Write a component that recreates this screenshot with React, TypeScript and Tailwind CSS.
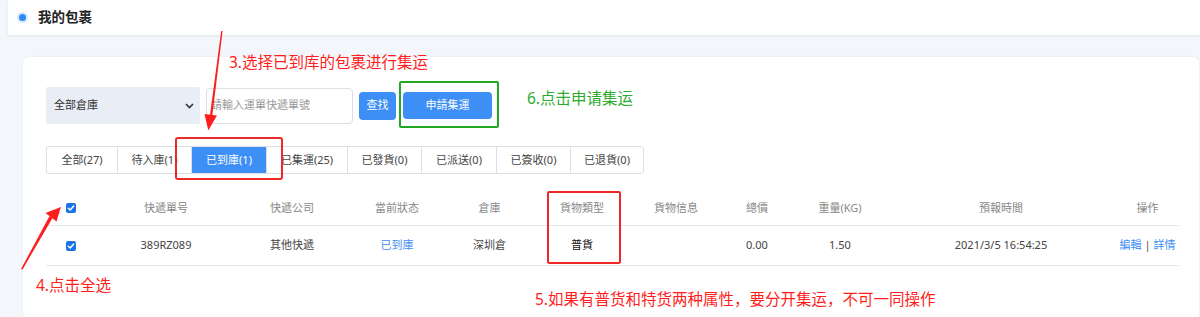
import React from "react";

const F = "font-['Noto_Sans','Noto_Sans_CJK_SC',sans-serif]";

function Check() {
  return (
    <div className="w-[10px] h-[10px] rounded-[2px] bg-[#1a73e8] flex items-center justify-center">
      <svg width="8" height="8" viewBox="0 0 8 8">
        <path d="M1.3 4.2 L3.2 6 L6.7 2" fill="none" stroke="white" strokeWidth="1.5" strokeLinecap="round" strokeLinejoin="round" />
      </svg>
    </div>
  );
}

const cols = "grid grid-cols-[49px_142px_110px_100px_85px_100px_88px_74px_92px_230px_63px]";

export default function App() {
  const tabs = ["全部(27)", "待入庫(1)", "已到庫(1)", "已集運(25)", "已發貨(0)", "已派送(0)", "已簽收(0)", "已退貨(0)"];
  const tabW = ["w-[70px]", "w-[74px]", "w-[75px]", "w-[81px]", "w-[74px]", "w-[75px]", "w-[74px]", "w-[73px]"];
  const headers = ["快遞單号", "快遞公司", "當前狀态", "倉庫", "貨物類型", "貨物信息", "總價", "重量(KG)", "預報時間", "操作"];
  return (
    <div className={`relative w-[1200px] h-[317px] overflow-hidden bg-[#f3f6fa] ${F}`}>
      {/* header */}
      <div className="ml-[8px] h-[35px] bg-white flex items-center shadow-[0_1px_3px_rgba(0,0,0,0.08)]">
        <div className="ml-[9px] w-[11px] h-[11px] rounded-full bg-[#d6e8fd] flex items-center justify-center">
          <div className="w-[7px] h-[7px] rounded-full bg-[#2f8cf2]" />
        </div>
        <span className="ml-[10px] text-[13.5px] font-bold text-[#222]">我的包裹</span>
      </div>

      {/* card */}
      <div className="mt-[22px] ml-[23px] w-[1176px] h-[262px] rounded-[6px] bg-white shadow-[0_0_3px_rgba(0,0,0,0.06)] pl-[23px] pt-[30px]">
        {/* controls */}
        <div className="flex items-center h-[37px]">
          <div className="w-[154px] h-[37px] bg-[#e9edf6] rounded-[2px] flex items-center justify-between pl-[8px] pr-[6px]">
            <span className="text-[11px] text-[#333]">全部倉庫</span>
            <svg width="9" height="6" viewBox="0 0 9 6">
              <path d="M1 1 L4.5 4.5 L8 1" fill="none" stroke="#333" strokeWidth="1.6" />
            </svg>
          </div>
          <div className="ml-[6px] w-[147px] h-[36px] border border-[#dcdfe6] rounded-[4px] flex items-center pl-[4px]">
            <span className="text-[11px] text-[#999]">請輸入運單快遞單號</span>
          </div>
          <div className="ml-[6px] w-[37px] h-[28px] bg-[#3d8ef5] rounded-[4px] flex items-center justify-center text-[11px] text-white">查找</div>
          <div className="ml-[7px] w-[89px] h-[27px] bg-[#3d8ef5] rounded-[4px] flex items-center justify-center text-[11px] text-white">申請集運</div>
        </div>

        {/* tabs */}
        <div className="mt-[22px] flex w-fit h-[28px] border border-[#dcdfe6] rounded-[3px] overflow-hidden">
          {tabs.map((t, i) => (
            <div
              key={t}
              className={`${tabW[i]} flex items-center justify-center text-[11px] ${i > 0 ? "border-l border-[#dcdfe6]" : ""} ${i === 2 ? "bg-[#3d8ef5] text-white" : "text-[#444]"}`}
            >
              {t}
            </div>
          ))}
        </div>

        {/* table */}
        <div className="mt-[17px] w-[1133px]">
          <div className={`${cols} h-[35px] items-center border-b border-[#e6e8ec] text-[11px] text-[#888]`}>
            <div className="flex justify-center"><Check /></div>
            {headers.map((h) => (
              <div key={h} className="text-center">{h}</div>
            ))}
          </div>
          <div className={`${cols} h-[40px] items-center border-b border-[#e6e8ec] text-[11px] text-[#444]`}>
            <div className="flex justify-center"><Check /></div>
            <div className="text-center">389RZ089</div>
            <div className="text-center">其他快遞</div>
            <div className="text-center text-[#3d8ef5]">已到庫</div>
            <div className="text-center">深圳倉</div>
            <div className="text-center text-[#111]">普貨</div>
            <div className="text-center"></div>
            <div className="text-center">0.00</div>
            <div className="text-center">1.50</div>
            <div className="text-center">2021/3/5 16:54:25</div>
            <div className="text-center">
              <span className="text-[#3d8ef5]">編輯</span>
              <span className="text-[#555]"> | </span>
              <span className="text-[#3d8ef5]">詳情</span>
            </div>
          </div>
        </div>
      </div>

      {/* annotations overlay */}
      <div className="absolute left-[229px] top-[52px] text-[15.5px] leading-[20px] text-[#ff1e1e]">3.选择已到库的包裹进行集运</div>
      <div className="absolute left-[527px] top-[88px] text-[15.5px] leading-[20px] text-[#2dab2d]">6.点击申请集运</div>
      <div className="absolute left-[36px] top-[275px] text-[15.5px] leading-[20px] text-[#ff1e1e]">4.点击全选</div>
      <div className="absolute left-[535px] top-[289px] text-[15.5px] leading-[20px] text-[#ff1e1e]">5.如果有普货和特货两种属性，要分开集运，不可一同操作</div>

      <div className="absolute left-[399px] top-[81px] w-[100px] h-[47px] border-2 border-[#22a822] rounded-[2px]" />
      <div className="absolute left-[175px] top-[137px] w-[108px] h-[43px] border-2 border-[#f02828] rounded-[3px]" />
      <div className="absolute left-[547px] top-[191px] w-[74px] h-[73px] border-2 border-[#f02828] rounded-[2px]" />

      <svg className="absolute left-0 top-0" width="1200" height="317" viewBox="0 0 1200 317">
        <polygon points="221.2,31 222.6,31 212.4,115 210,115" fill="#ff1e1e" />
        <polygon points="204.5,114 217,115.5 208.3,130.5" fill="#ff1e1e" />
        <polygon points="21,269 22.5,269.5 52.5,218 49.5,216" fill="#ff1e1e" />
        <polygon points="45.5,213 56.5,221.5 61,207" fill="#ff1e1e" />
      </svg>
    </div>
  );
}
